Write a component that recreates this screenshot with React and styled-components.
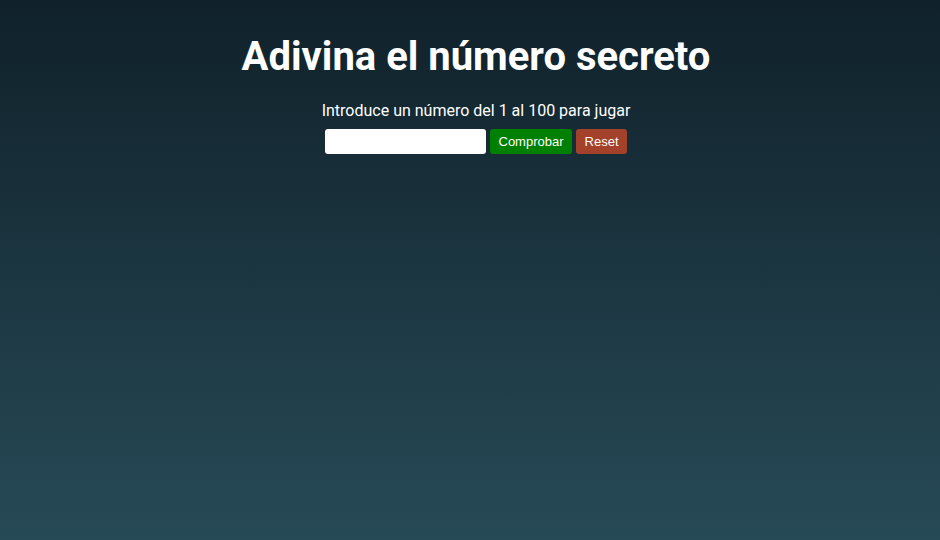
import styled, { createGlobalStyle } from "styled-components";

const GlobalStyle = createGlobalStyle`
  html, body {
    margin: 0;
    padding: 0;
  }
  body {
    min-height: 540px;
    background: linear-gradient(180deg, #10212a 0%, #274a57 100%);
    font-family: Roboto, "Liberation Sans", sans-serif;
    color: #fff;
  }
`;

const Page = styled.main`
  display: flex;
  flex-direction: column;
  align-items: center;
  padding: 33px 0 0 12px;
`;

const Title = styled.h1`
  margin: 0 0 22px;
  font-size: 40px;
  font-weight: 700;
  line-height: 47px;
`;

const Hint = styled.p`
  margin: 0 0 8px;
  font-size: 16px;
  line-height: 18.75px;
`;

const Controls = styled.div`
  display: flex;
  gap: 4px;
`;

const NumberInput = styled.input`
  width: 161px;
  height: 25px;
  box-sizing: border-box;
  border: none;
  border-radius: 3px;
  background: #fff;
  padding: 0 6px;
  font-size: 13px;
  outline: none;
`;

const Button = styled.button`
  height: 25px;
  padding: 0 8.5px;
  border: none;
  border-radius: 3px;
  background: ${(p) => (p.$variant === "reset" ? "#a3412a" : "#008000")};
  color: #fff;
  font-family: "Liberation Sans", Arial, sans-serif;
  font-size: 13px;
  cursor: pointer;
`;

const App = () => (
  <>
    <GlobalStyle />
    <Page>
      <Title>Adivina el número secreto</Title>
      <Hint>Introduce un número del 1 al 100 para jugar</Hint>
      <Controls>
        <NumberInput type="number" />
        <Button>Comprobar</Button>
        <Button $variant="reset">Reset</Button>
      </Controls>
    </Page>
  </>
);

export default App;
